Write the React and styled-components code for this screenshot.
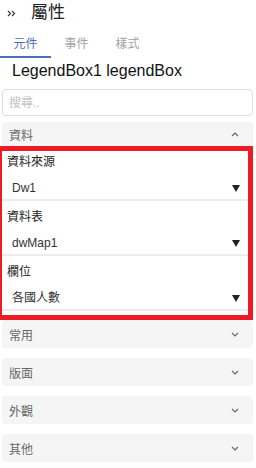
import React from 'react';
import styled, { createGlobalStyle } from 'styled-components';

const GlobalStyle = createGlobalStyle`
  html, body {
    margin: 0;
    padding: 0;
    background: #fff;
  }
  body {
    font-family: "Liberation Sans", "Noto Sans CJK TC", sans-serif;
    color: #222;
  }
`;

const Page = styled.div`
  width: 256px;
  height: 468px;
  overflow: hidden;
`;

const TitleBar = styled.div`
  height: 28px;
  display: flex;
  align-items: center;
  padding-left: 7px;
  gap: 15px;
  padding-bottom: 2px;
  box-sizing: border-box;
`;

const Title = styled.div`
  font-size: 17px;
  line-height: 20px;
  color: #222;
`;

const Tabs = styled.div`
  display: flex;
  height: 30px;
`;

const Tab = styled.div`
  width: 51px;
  height: 30px;
  box-sizing: border-box;
  display: flex;
  align-items: center;
  justify-content: center;
  font-size: 12px;
  color: ${p => (p.$active ? '#4a6fb5' : '#a3a3a3')};
  border-bottom: 2px solid ${p => (p.$active ? '#4a6fb5' : 'transparent')};
`;

const ObjName = styled.div`
  margin-top: 3px;
  padding-left: 12px;
  font-size: 16px;
  line-height: 20px;
  color: #111;
`;

const Body = styled.div`
  padding: 0 3px 0 2px;
`;

const Search = styled.input`
  display: block;
  width: 100%;
  box-sizing: border-box;
  margin-top: 8px;
  height: 27px;
  border: 1px solid #dedede;
  border-radius: 4px;
  padding: 0 6px;
  font-family: inherit;
  font-size: 12px;
  outline: none;
  &::placeholder {
    color: #c0c0c0;
  }
`;

const PanelHeader = styled.div`
  height: ${p => (p.$open ? '24px' : '28px')};
  margin-top: ${p => p.$gap}px;
  display: flex;
  align-items: center;
  justify-content: space-between;
  padding: 0 14px 0 7px;
  background: #f5f5f5;
  border-radius: ${p => (p.$open ? '4px 4px 0 0' : '4px')};
  font-size: 12px;
  color: #666;
`;

const PanelBody = styled.div`
  position: relative;
  padding-bottom: 9px;

  &::after {
    content: '';
    position: absolute;
    top: 0;
    bottom: 0;
    left: -5px;
    right: 0;
    border: 5px solid #ed1c24;
    pointer-events: none;
  }
`;

const Field = styled.div`
  padding-top: 7px;
`;

const Label = styled.div`
  font-size: 12px;
  line-height: 18px;
  padding-left: 5px;
  color: #222;
`;

const SelectRow = styled.div`
  display: flex;
  align-items: center;
  justify-content: space-between;
  padding: 8px 13px 2px 10px;
  line-height: 18px;
  font-size: 12px;
  color: #333;
  border-bottom: 2px solid #ececec;
`;

const Expand = ({ up }) => (
  <svg width="8" height="5" viewBox="0 0 8 5">
    <polyline
      points={up ? '1,4 4,1 7,4' : '1,1 4,4 7,1'}
      fill="none"
      stroke="#666"
      strokeWidth="1.2"
    />
  </svg>
);

const Caret = () => (
  <svg width="8" height="7" viewBox="0 0 8 7">
    <polygon points="0,0 8,0 4,7" fill="#222" />
  </svg>
);

const Collapse = () => (
  <svg width="9" height="7" viewBox="0 0 9 7">
    <polyline points="1,1 3.5,3.5 1,6" fill="none" stroke="#333" strokeWidth="1.1" />
    <polyline points="5,1 7.5,3.5 5,6" fill="none" stroke="#333" strokeWidth="1.1" />
  </svg>
);

const fields = [
  { label: '資料來源', value: 'Dw1' },
  { label: '資料表', value: 'dwMap1' },
  { label: '欄位', value: '各國人數' },
];

const sections = ['常用', '版面', '外觀', '其他'];

export default function App() {
  return (
    <Page>
      <GlobalStyle />
      <TitleBar>
        <Collapse />
        <Title>屬性</Title>
      </TitleBar>
      <Tabs>
        <Tab $active>元件</Tab>
        <Tab>事件</Tab>
        <Tab>樣式</Tab>
      </Tabs>
      <ObjName>LegendBox1 legendBox</ObjName>
      <Body>
        <Search placeholder="搜尋.." />
        <PanelHeader $open $gap={6}>
          資料
          <Expand up />
        </PanelHeader>
        <PanelBody>
          {fields.map(f => (
            <Field key={f.label}>
              <Label>{f.label}</Label>
              <SelectRow>
                {f.value}
                <Caret />
              </SelectRow>
            </Field>
          ))}
        </PanelBody>
        {sections.map((s, i) => (
          <PanelHeader key={s} $gap={i === 0 ? 0 : 10}>
            {s}
            <Expand />
          </PanelHeader>
        ))}
      </Body>
    </Page>
  );
}
